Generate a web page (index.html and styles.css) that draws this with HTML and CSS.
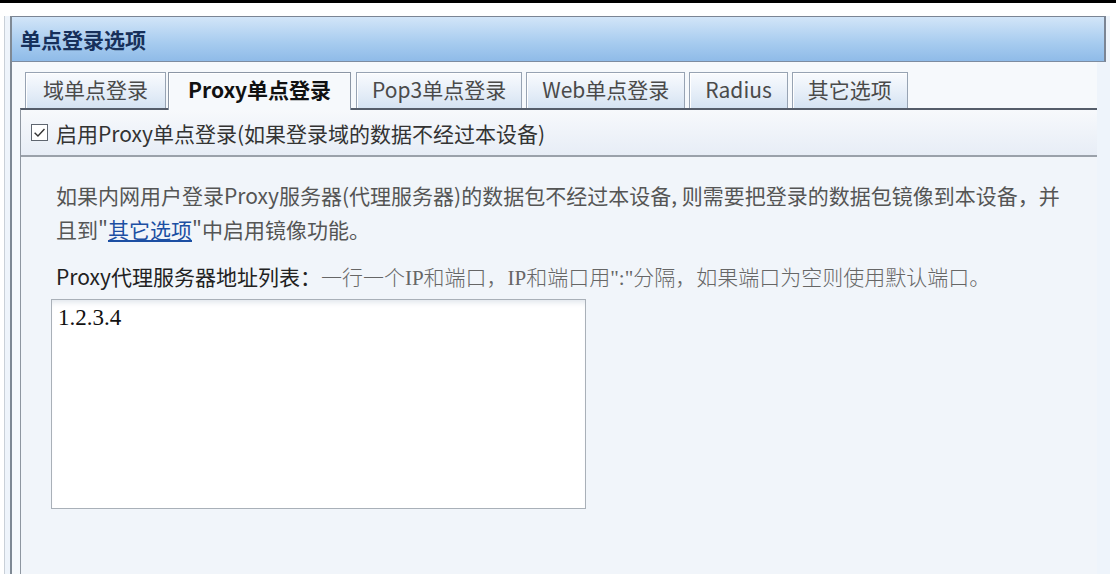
FILE: index.html
```html
<!DOCTYPE html>
<html lang="zh-CN">
<head>
    <meta charset="UTF-8">
    <meta name="viewport" content="width=device-width, initial-scale=1.0">
    <title>单点登录选项</title>
    <link rel="stylesheet" href="styles.css">
</head>
<body>
    <div class="topbar"></div>
    <div class="frame">
        <div class="box">
            <div class="header">单点登录选项</div>
            <div class="body">
                <ul class="tabs">
                    <li class="tab">域单点登录</li>
                    <li class="tab active">Proxy单点登录</li>
                    <li class="tab">Pop3单点登录</li>
                    <li class="tab">Web单点登录</li>
                    <li class="tab">Radius</li>
                    <li class="tab">其它选项</li>
                </ul>
                <div class="pane">
                    <label class="check-row">
                        <span class="checkbox">
                            <svg width="13" height="13" viewBox="0 0 12 12">
                                <path d="M1.5 6.2 L4.6 9.2 L10.6 2.8" fill="none" stroke="#333" stroke-width="1.3"/>
                            </svg>
                        </span>
                        <span>启用Proxy单点登录(如果登录域的数据不经过本设备)</span>
                    </label>
                    <div class="pane-content">
                        <p class="desc">如果内网用户登录Proxy服务器(代理服务器)的数据包不经过本设备, 则需要把登录的数据包镜像到本设备，并且到"<a href="#" class="link">其它选项</a>"中启用镜像功能。</p>
                        <p class="label"><span class="label-name">Proxy代理服务器地址列表：</span><span class="hint">一行一个IP和端口，IP和端口用":"分隔，如果端口为空则使用默认端口。</span></p>
                        <textarea class="proxy-list">1.2.3.4</textarea>
                    </div>
                </div>
            </div>
        </div>
    </div>
</body>
</html>
```

FILE: styles.css
```css
html, body {
    margin: 0;
    height: 100%;
    overflow: hidden;
}

body {
    background: #ffffff;
    font-family: "Noto Sans CJK SC", sans-serif;
    font-size: 21px;
    color: #333333;
}

.topbar {
    height: 3px;
    background: #000000;
}

.frame {
    margin: 13px 6px 0 4px;
    padding-right: 4px;
    padding-left: 5px;
    height: 560px;
    background: #eef4fb;
    border-left: 1px solid #c9d0d8;
}

.box {
    height: 100%;
    border-left: 2px solid #7f8994;
    display: flex;
    flex-direction: column;
}

.header {
    height: 44px;
    line-height: 44px;
    padding-left: 8px;
    font-weight: bold;
    color: #17305a;
    background: linear-gradient(#d2e5f8, #a6cbef 60%, #8fbbe8);
    border-top: 1px solid #7b8594;
    border-bottom: 1px solid #7d8ca0;
    border-right: 2px solid #7b8594;
}

.body {
    flex: 1;
    margin-right: 9px;
    padding-left: 8px;
    background: #f6f9fc;
    display: flex;
    flex-direction: column;
}

.tabs {
    list-style: none;
    margin: 0 0 0 5px;
    padding: 10px 0 0 0;
    display: flex;
    align-items: flex-end;
}

.tab {
    height: 35px;
    line-height: 33px;
    padding: 0 15px;
    margin-right: 4px;
    color: #4a4a4a;
    background: linear-gradient(#f9fbfe, #e6eef8 55%, #d5e3f2);
    border: 1px solid #97a3b3;
    border-bottom: none;
    box-shadow: inset 1px 1px 0 #ffffff;
}

.tab:first-child {
    padding: 0 17px;
}

.tab.active {
    position: relative;
    z-index: 1;
    height: 37px;
    margin: 0 5px -2px -2px;
    padding: 0 19px;
    font-weight: bold;
    color: #111111;
    background: #f6f9fc;
    border-color: #8b96a5;
}

.pane {
    flex: 1;
    border-left: 1px solid #8e96a0;
    border-top: 2px solid #555d6a;
    background: #f1f5fa;
}

.check-row {
    height: 45px;
    display: flex;
    align-items: center;
    gap: 8px;
    padding-left: 10px;
    background: linear-gradient(#f7f9fc, #e7edf6);
    border-bottom: 2px solid #9aa1aa;
}

.checkbox {
    width: 15px;
    height: 15px;
    display: flex;
    justify-content: center;
    align-items: center;
    background: #ffffff;
    border: 1px solid #5f6670;
}

.pane-content {
    padding: 21px 0 0 30px;
}

.desc,
.label {
    margin: 0;
    padding-left: 5px;
    line-height: 34px;
}

.desc {
    width: 1020px;
    color: #555555;
}

.link {
    color: #1c4fa3;
}

.label {
    margin-top: 13px;
}

.label-name {
    color: #222222;
}

.hint {
    color: #666666;
    font-family: "Liberation Serif", "Noto Sans CJK SC", serif;
    font-weight: 300;
}

.proxy-list {
    display: block;
    margin-top: 4px;
    width: 521px;
    height: 198px;
    padding: 5px 6px;
    font-family: "Liberation Serif", serif;
    font-size: 23px;
    line-height: 26px;
    color: #111111;
    background: #ffffff;
    border: 1px solid #a9b0b8;
    box-shadow: inset 0 6px 6px -4px #dde3ea;
    resize: none;
    outline: none;
}
```
